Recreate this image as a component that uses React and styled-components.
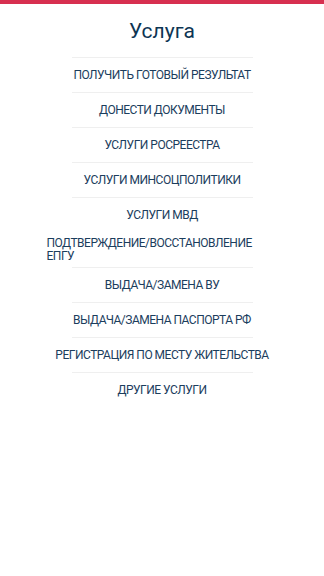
import React from 'react';
import styled, { createGlobalStyle } from 'styled-components';

const GlobalStyle = createGlobalStyle`
	html, body {
		margin: 0;
		padding: 0;
		background: #fff;
	}
	body {
		font-family: Roboto, 'Noto Sans', sans-serif;
	}
`;

const Page = styled.div`
	min-height: 576px;
	background: #fff;
`;

const TopBar = styled.div`
	height: 4px;
	background: #d72f50;
`;

const Title = styled.h1`
	margin: 0;
	padding: 14px 0 13px;
	text-align: center;
	font-size: 21px;
	font-weight: 400;
	line-height: 26px;
	color: #0d3553;
`;

const List = styled.ul`
	list-style: none;
	margin: 0 auto;
	padding: 0;
	width: 181px;
`;

const Item = styled.li`
	height: 34px;
	display: flex;
	align-items: center;
	justify-content: ${(props) => (props.wide ? 'flex-start' : 'center')};
	border-top: 1px solid ${(props) => (props.wide ? 'transparent' : '#efefef')};
	cursor: pointer;
`;

const Label = styled.span`
	flex-shrink: 0;
	font-size: 12px;
	line-height: 13px;
	letter-spacing: -0.5px;
	text-transform: uppercase;
	color: #1b3d5d;
	white-space: ${(props) => (props.wide ? 'normal' : 'nowrap')};
	text-align: ${(props) => (props.wide ? 'left' : 'center')};
	margin-left: ${(props) => (props.wide ? '-25px' : '0')};
	width: ${(props) => (props.wide ? '225px' : 'auto')};
`;

const services = [
	{ title: 'Получить готовый результат' },
	{ title: 'Донести документы' },
	{ title: 'Услуги Росреестра' },
	{ title: 'Услуги Минсоцполитики' },
	{ title: 'Услуги МВД' },
	{ title: 'Подтверждение/\u2060восстановление ЕПГУ', wide: true },
	{ title: 'Выдача/замена ВУ' },
	{ title: 'Выдача/замена паспорта РФ' },
	{ title: 'Регистрация по месту жительства' },
	{ title: 'Другие услуги' },
];

function App() {
	return (
		<Page>
			<GlobalStyle />
			<TopBar />
			<Title>Услуга</Title>
			<List>
				{services.map((service) => (
					<Item key={service.title} wide={service.wide}>
						<Label wide={service.wide}>{service.title}</Label>
					</Item>
				))}
			</List>
		</Page>
	);
}

export default App;
